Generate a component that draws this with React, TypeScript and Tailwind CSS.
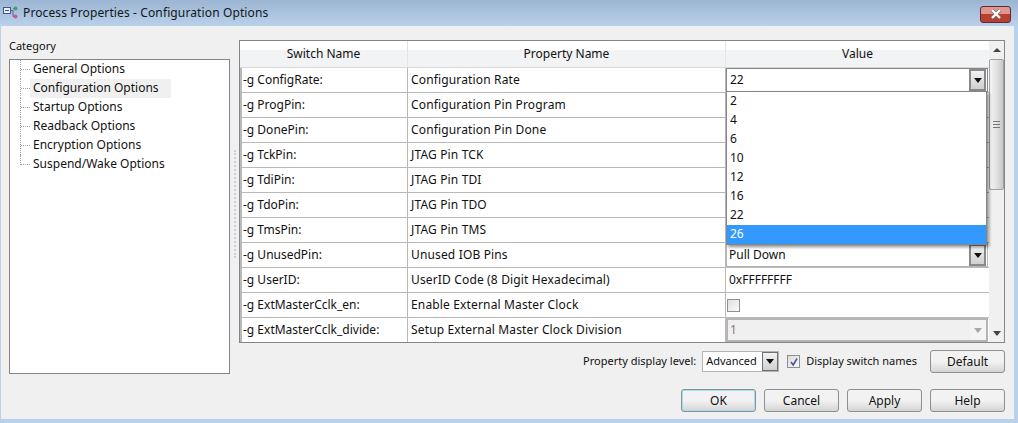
const categories = [
  'General Options',
  'Configuration Options',
  'Startup Options',
  'Readback Options',
  'Encryption Options',
  'Suspend/Wake Options',
]

const rows = [
  ['-g ConfigRate:', 'Configuration Rate'],
  ['-g ProgPin:', 'Configuration Pin Program'],
  ['-g DonePin:', 'Configuration Pin Done'],
  ['-g TckPin:', 'JTAG Pin TCK'],
  ['-g TdiPin:', 'JTAG Pin TDI'],
  ['-g TdoPin:', 'JTAG Pin TDO'],
  ['-g TmsPin:', 'JTAG Pin TMS'],
  ['-g UnusedPin:', 'Unused IOB Pins'],
  ['-g UserID:', 'UserID Code (8 Digit Hexadecimal)'],
  ['-g ExtMasterCclk_en:', 'Enable External Master Clock'],
  ['-g ExtMasterCclk_divide:', 'Setup External Master Clock Division'],
]

const rates = ['2', '4', '6', '10', '12', '16', '22', '26']

const buttonClass =
  'flex h-[23px] w-[75px] items-center justify-center rounded-[3px] border border-[#8e8f8f] bg-gradient-to-b from-[#f2f2f2] from-50% to-[#d4d4d4] text-[12px] text-[#111]'

function ArrowDown({ color = '#111' }: { color?: string }) {
  return (
    <svg viewBox="0 0 8 5" className="h-[5px] w-[8px]">
      <path d="M0 0h8L4 5z" fill={color} />
    </svg>
  )
}

function ComboButton() {
  return (
    <span className="flex h-[22px] w-[17px] items-center justify-center border-2 border-[#8a8a8a] bg-gradient-to-b from-[#f2f2f2] to-[#d0d0d0]">
      <ArrowDown />
    </span>
  )
}

function ValueCell({ index }: { index: number }) {
  if (index === 0)
    return (
      <div className="flex h-[24px] w-[262px] items-center justify-between border border-[#85858b] bg-white pl-[3px] pr-[1px]">
        <span>22</span>
        <ComboButton />
      </div>
    )
  if (index === 7)
    return (
      <div className="flex h-[24px] w-[262px] items-center justify-between border border-[#b4b4b4] bg-white pl-[2px] pr-[1px]">
        <span>Pull Down</span>
        <ComboButton />
      </div>
    )
  if (index === 8) return <div className="flex h-[24px] items-center pl-[3px]">0xFFFFFFFF</div>
  if (index === 9)
    return (
      <div className="flex h-[24px] items-center pl-[1px]">
        <span className="h-[13px] w-[13px] border border-[#8e8f8f] bg-gradient-to-br from-[#e0e0e0] to-[#fafafa]" />
      </div>
    )
  if (index === 10)
    return (
      <div className="flex h-[24px] w-[262px] items-center justify-between border-2 border-[#b4b4b4] bg-[#f0f0f0] pl-[2px] text-[#8a7a70]">
        <span>1</span>
        <span className="flex h-full w-[16px] items-center justify-center bg-[#f4f4f4]">
          <ArrowDown color="#a8a8a8" />
        </span>
      </div>
    )
  return <div className="h-[24px]" />
}

export default function App() {
  return (
    <div
      className="flex h-[423px] w-[1018px] flex-col overflow-hidden bg-[#b9d1ea] text-[12px] text-[#111]"
      style={{ fontFamily: '"Noto Sans", Tahoma, sans-serif' }}
    >
      {/* title bar */}
      <div className="flex h-[26px] shrink-0 items-center justify-between bg-gradient-to-b from-[#9cb5d2] to-[#b9d1ea] pl-[3px] pr-[7px]">
        <div className="flex items-center gap-[4px]">
          <svg viewBox="0 0 16 14" className="h-[14px] w-[16px]" fill="none">
            <rect x="0.5" y="1.5" width="7" height="6" stroke="#3f5596" fill="#e8eefa" />
            <path d="M2 4.5h4" stroke="#3f5596" />
            <path d="M8 4.5h2v6h1M10 2.5h1" stroke="#4c5f8c" />
            <circle cx="12.5" cy="2.5" r="2" fill="#4f9a6a" />
            <circle cx="12.5" cy="10.5" r="2" fill="#c8589c" />
          </svg>
          <span className="text-[12px] tracking-[0.12px] text-[#101820]">Process Properties - Configuration Options</span>
        </div>
        <button className="mt-[2px] flex h-[17px] w-[31px] items-center justify-center rounded-[3px] border border-[#5c2a3a] bg-gradient-to-b from-[#e0968c] from-45% to-[#b93f30] to-50%">
          <svg viewBox="0 0 14 10" className="h-[10px] w-[14px]">
            <path d="M3 1l8 8M11 1l-8 8" stroke="#7a6a70" strokeWidth="3.6" />
            <path d="M3 1l8 8M11 1l-8 8" stroke="#fff" strokeWidth="2.2" />
          </svg>
        </button>
      </div>

      {/* dialog body */}
      <div className="mb-[4px] ml-[1px] mr-[4px] flex min-h-0 flex-1 flex-col bg-[#f0f0f0] pl-[8px] pr-[9px] pt-[14px]">
        <div className="flex">
          {/* category tree */}
          <div className="flex w-[221px] shrink-0 flex-col">
            <div className="flex h-[19px] items-end pb-[5px] text-[11px]">Category</div>
            <div className="h-[315px] border border-[#84848c] bg-white">
              <ul>
                {categories.map((name, i) => (
                  <li key={name} className="flex h-[19px] items-start pl-[10px]">
                    <span className={`w-[10px] border-l border-dotted border-[#a0a0a0] ${i === 5 ? 'h-[10px]' : 'h-[19px]'}`}>
                      <span className="mt-[9px] block border-t border-dotted border-[#a0a0a0]" />
                    </span>
                    <span className={`flex h-[19px] w-[141px] items-center pb-[1px] pl-[3px] ${i === 1 ? 'bg-[#f0f0f0]' : ''}`}>
                      <span className="whitespace-nowrap">{name}</span>
                    </span>
                  </li>
                ))}
              </ul>
            </div>
          </div>

          {/* splitter */}
          <div className="flex w-[9px] shrink-0 justify-center pt-[110px]">
            <div className="h-[108px] w-[2px] border-l-2 border-dotted border-[#cfcfcf]" />
          </div>

          <div className="flex w-[766px] shrink-0 flex-col">
            {/* property table */}
            <div className="relative flex h-[303px] overflow-hidden border border-[#84848c] bg-white">
              <div className="w-[749px] shrink-0">
                <div className="flex h-[27px] border-b border-[#d8d8d8] bg-gradient-to-b from-white from-35% to-[#f2f3f5] to-35%">
                  <div className="flex w-[168px] items-center justify-center border-r border-[#e3e4e6]">Switch Name</div>
                  <div className="flex w-[318px] items-center justify-center border-r border-[#e3e4e6]">Property Name</div>
                  <div className="flex flex-1 items-center justify-center">Value</div>
                </div>
                {rows.map(([sw, prop], i) => (
                  <div key={sw} className="flex h-[25px] border-b border-l-2 border-[#b9b9b9]">
                    <div className="flex w-[166px] items-center whitespace-nowrap border-r border-[#b9b9b9] pl-[1px]">{sw}</div>
                    <div className="flex w-[318px] items-center whitespace-nowrap border-r border-[#b9b9b9] pl-[3px] tracking-[0.15px]">{prop}</div>
                    <div className="min-w-0 flex-1">
                      <ValueCell index={i} />
                    </div>
                  </div>
                ))}
              </div>

              {/* scrollbar */}
              <div className="ml-auto flex w-[15px] shrink-0 flex-col items-center bg-[#f0f0f0]">
                <div className="flex h-[18px] items-center">
                  <svg viewBox="0 0 8 4" className="h-[4px] w-[8px]">
                    <path d="M0 4h8L4 0z" fill="#444" />
                  </svg>
                </div>
                <div className="flex h-[131px] w-[15px] items-center justify-center rounded-[2px] border border-[#a0a0a0] bg-gradient-to-r from-[#f4f4f4] via-[#e2e2e2] to-[#c8c8c8]">
                  <span className="h-[7px] w-[7px] border-y border-[#777] bg-[linear-gradient(#777,#777)] bg-[length:100%_1px] bg-center bg-no-repeat" />
                </div>
                <div className="mt-auto flex h-[18px] items-center">
                  <ArrowDown color="#444" />
                </div>
              </div>

              {/* open dropdown */}
              <div className="absolute left-[486px] top-[50px] w-[261px] border border-[#84848c] bg-white shadow-[2px_2px_3px_rgba(0,0,0,0.45)]">
                {rates.map((rate) => (
                  <div
                    key={rate}
                    className={`flex h-[19px] items-center pb-[1px] pl-[3px] ${rate === '26' ? 'bg-[#3399ff] text-white' : ''}`}
                  >
                    {rate}
                  </div>
                ))}
              </div>
            </div>

            {/* display level row */}
            <div className="mt-[7px] flex items-center justify-end">
              <span className="text-[11px]">Property display level:</span>
              <div className="ml-[6px] flex h-[21px] w-[77px] items-center justify-between border border-[#b4b4b4] bg-white pl-[3px]">
                <span className="text-[11px]">Advanced</span>
                <span className="flex h-[19px] w-[16px] items-center justify-center border border-[#707070] bg-gradient-to-b from-[#f2f2f2] to-[#d0d0d0]">
                  <ArrowDown />
                </span>
              </div>
              <span className="ml-[8px] flex h-[13px] w-[13px] items-center justify-center border border-[#8e8f8f] bg-gradient-to-br from-[#dcdcdc] to-[#f8f8f8]">
                <svg viewBox="0 0 10 10" className="h-[10px] w-[10px]" fill="none">
                  <path d="M2 5l2.2 3L8 1.5" stroke="#4a5a9a" strokeWidth="1.6" />
                </svg>
              </span>
              <span className="ml-[6px] text-[11px]">Display switch names</span>
              <button className={`${buttonClass} ml-[13px]`}>Default</button>
            </div>
          </div>
        </div>

        {/* dialog buttons */}
        <div className="mt-[15px] flex justify-end gap-[8px]">
          <button className={`${buttonClass} border-[#3c9fd0] shadow-[inset_0_0_0_1px_#9fe0f8]`}>OK</button>
          <button className={buttonClass}>Cancel</button>
          <button className={buttonClass}>Apply</button>
          <button className={buttonClass}>Help</button>
        </div>
      </div>
    </div>
  )
}
